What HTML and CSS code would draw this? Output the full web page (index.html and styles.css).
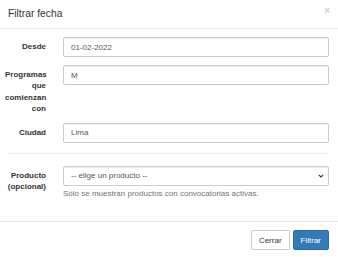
FILE: index.html
```html
<!DOCTYPE html>
<html lang="es">
<head>
    <meta charset="UTF-8">
    <meta name="viewport" content="width=device-width, initial-scale=1.0">
    <title>Filtrar fecha</title>
    <link rel="stylesheet" href="styles.css">
</head>
<body>
    <div class="modal">
        <div class="modal-header">
            <h4 class="modal-title">Filtrar fecha</h4>
            <button type="button" class="close">&times;</button>
        </div>

        <form class="modal-body">
            <div class="form-group">
                <label for="desde">Desde</label>
                <input type="text" id="desde" value="01-02-2022">
            </div>

            <div class="form-group">
                <label for="programas">Programas que comienzan con</label>
                <input type="text" id="programas" value="M">
            </div>

            <div class="form-group">
                <label for="ciudad">Ciudad</label>
                <input type="text" id="ciudad" value="Lima">
            </div>

            <hr>

            <div class="form-group form-group-last">
                <label for="producto">Producto (opcional)</label>
                <div class="field">
                    <div class="select-wrap">
                        <select id="producto">
                            <option>-- elige un producto --</option>
                        </select>
                        <svg class="chevron" width="6" height="4" viewBox="0 0 6 4">
                            <path d="M0.8 0.8 L3 3 L5.2 0.8" fill="none" stroke="#333" stroke-width="1.1"/>
                        </svg>
                    </div>
                    <p class="help-block">Sólo se muestran productos con convocatorias activas.</p>
                </div>
            </div>
        </form>

        <div class="modal-footer">
            <button type="button" class="btn btn-default">Cerrar</button>
            <button type="button" class="btn btn-primary">Filtrar</button>
        </div>
    </div>
</body>
</html>
```

FILE: styles.css
```css
:root {
    --text: #333;
    --input-text: #555;
    --muted: #737373;
    --line: #e5e5e5;
    --input-border: #ccc;
    --primary: #337ab7;
    --primary-border: #2e6da4;
}

* {
    margin: 0;
    padding: 0;
    box-sizing: border-box;
    font-family: 'Liberation Sans', Arial, sans-serif;
}

body {
    background-color: white;
    color: var(--text);
    font-size: 8px;
    line-height: 1.42857;
}

.modal {
    width: 338px;
    height: 257px;
    background-color: white;
}

.modal-header {
    display: flex;
    justify-content: space-between;
    align-items: flex-start;
    height: 29px;
    padding: 6px 9px 7px 8px;
    border-bottom: 1px solid var(--line);
}

.modal-title {
    font-size: 10.3px;
    font-weight: normal;
    line-height: 15px;
}

.close {
    background: none;
    border: none;
    font-size: 10px;
    font-weight: bold;
    line-height: 8px;
    color: #000;
    opacity: 0.2;
    margin-top: 1px;
    margin-right: -1px;
}

.modal-body {
    height: 192px;
    padding: 8px 9px 0 5px;
}

.form-group {
    display: grid;
    grid-template-columns: 41px 1fr;
    column-gap: 17px;
    margin-bottom: 8px;
}

label {
    text-align: right;
    font-weight: bold;
    padding-top: 4px;
}

input, select {
    width: 100%;
    height: 20px;
    padding: 0 7px;
    border: 1px solid var(--input-border);
    border-radius: 2px;
    box-shadow: inset 0 1px 1px rgba(0, 0, 0, 0.075);
    background-color: white;
    color: var(--input-text);
    font-size: 8px;
}

select {
    appearance: none;
    -webkit-appearance: none;
    padding-left: 7px;
}

.select-wrap {
    position: relative;
}

.chevron {
    position: absolute;
    right: 5px;
    top: 8px;
}

hr {
    border: none;
    border-top: 1px solid #eee;
    margin: 10px 0 12px 2px;
}

.help-block {
    margin-top: 2px;
    color: var(--muted);
}

.modal-footer {
    display: flex;
    justify-content: flex-end;
    gap: 3px;
    padding: 8px 9px 7px;
    border-top: 1px solid var(--line);
}

.btn {
    height: 20px;
    padding: 0 7px;
    font-size: 8px;
    border: 1px solid transparent;
    border-radius: 2px;
}

.btn-default {
    background-color: white;
    border-color: var(--input-border);
    color: var(--text);
}

.btn-primary {
    background-color: var(--primary);
    border-color: var(--primary-border);
    color: white;
}
```
